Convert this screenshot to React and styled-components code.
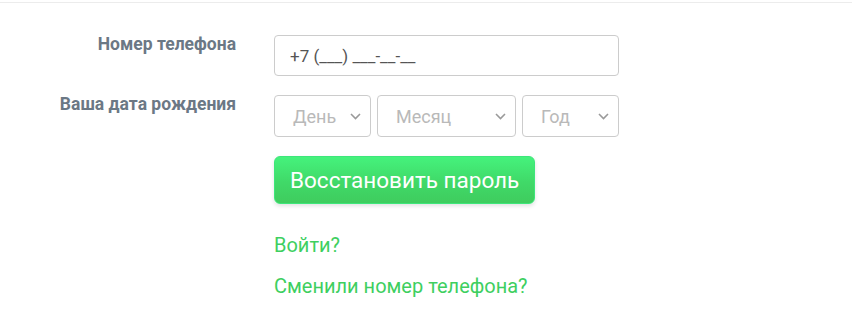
import React from 'react';
import styled, { createGlobalStyle } from 'styled-components';

const GlobalStyle = createGlobalStyle`
  body {
    margin: 0;
    background: #fff;
    font-family: Roboto, 'Liberation Sans', sans-serif;
  }
`;

const Chevron = () => (
  <svg width="11" height="7" viewBox="0 0 11 7" fill="none">
    <path d="M1 1l4.5 4.5L10 1" stroke="#9a9a9a" strokeWidth="1.6" />
  </svg>
);

const DateSelect = ({ label, width }) => (
  <SelectBox $width={width}>
    <SelectText>{label}</SelectText>
    <Chevron />
  </SelectBox>
);

const App = () => (
  <>
    <GlobalStyle />
    <Page>
      <Form>
        <Label>Номер телефона</Label>
        <Input value="+7 (___) ___-__-__" readOnly />
        <Label>Ваша дата рождения</Label>
        <DateRow>
          <DateSelect label="День" width="97px" />
          <DateSelect label="Месяц" width="139px" />
          <DateSelect label="Год" width="97px" />
        </DateRow>
        <Spacer />
        <Submit type="button">Восстановить пароль</Submit>
        <Spacer />
        <Links>
          <LinkText href="#">Войти?</LinkText>
          <LinkText href="#">Сменили номер телефона?</LinkText>
        </Links>
      </Form>
    </Page>
  </>
);

const Page = styled.div`
  margin-top: 2px;
  border-top: 1px solid #ececec;
  height: 313px;
`;

const Form = styled.div`
  display: grid;
  grid-template-columns: 236px 345px;
  column-gap: 38px;
  row-gap: 19px;
  padding-top: 32px;
`;

const Label = styled.div`
  text-align: right;
  font-size: 17.5px;
  font-weight: 700;
  color: #6b7885;
  line-height: 18px;
`;

const Input = styled.input`
  box-sizing: border-box;
  width: 345px;
  height: 41px;
  padding: 0 15px;
  border: 1px solid #cccccc;
  border-radius: 4px;
  font-family: Roboto, 'Liberation Sans', sans-serif;
  font-size: 17px;
  color: #555;
  outline: none;
`;

const DateRow = styled.div`
  display: flex;
  gap: 6px;
`;

const SelectBox = styled.div`
  box-sizing: border-box;
  width: ${(p) => p.$width};
  height: 42px;
  display: flex;
  align-items: center;
  justify-content: space-between;
  padding: 1px 9px 0 18px;
  border: 1px solid #cccccc;
  border-radius: 4px;
`;

const SelectText = styled.span`
  font-size: 18px;
  color: #b9b9b9;
`;

const Spacer = styled.div``;

const Submit = styled.button`
  justify-self: start;
  height: 48px;
  padding: 0 15px;
  border: 1px solid #3de67a;
  border-radius: 6px;
  background: linear-gradient(to bottom, #45f27c 0%, #40d968 55%, #3fcc5e 100%);
  box-shadow: 0 2px 4px rgba(0, 0, 0, 0.12);
  color: #fff;
  font-family: Roboto, 'Liberation Sans', sans-serif;
  font-size: 22.5px;
  cursor: pointer;
`;

const Links = styled.div`
  display: flex;
  flex-direction: column;
  align-items: flex-start;
  gap: 15px;
  padding-top: 9px;
`;

const LinkText = styled.a`
  font-size: 20px;
  line-height: 26px;
  color: #3ecf5f;
  text-decoration: none;
`;

export default App;
